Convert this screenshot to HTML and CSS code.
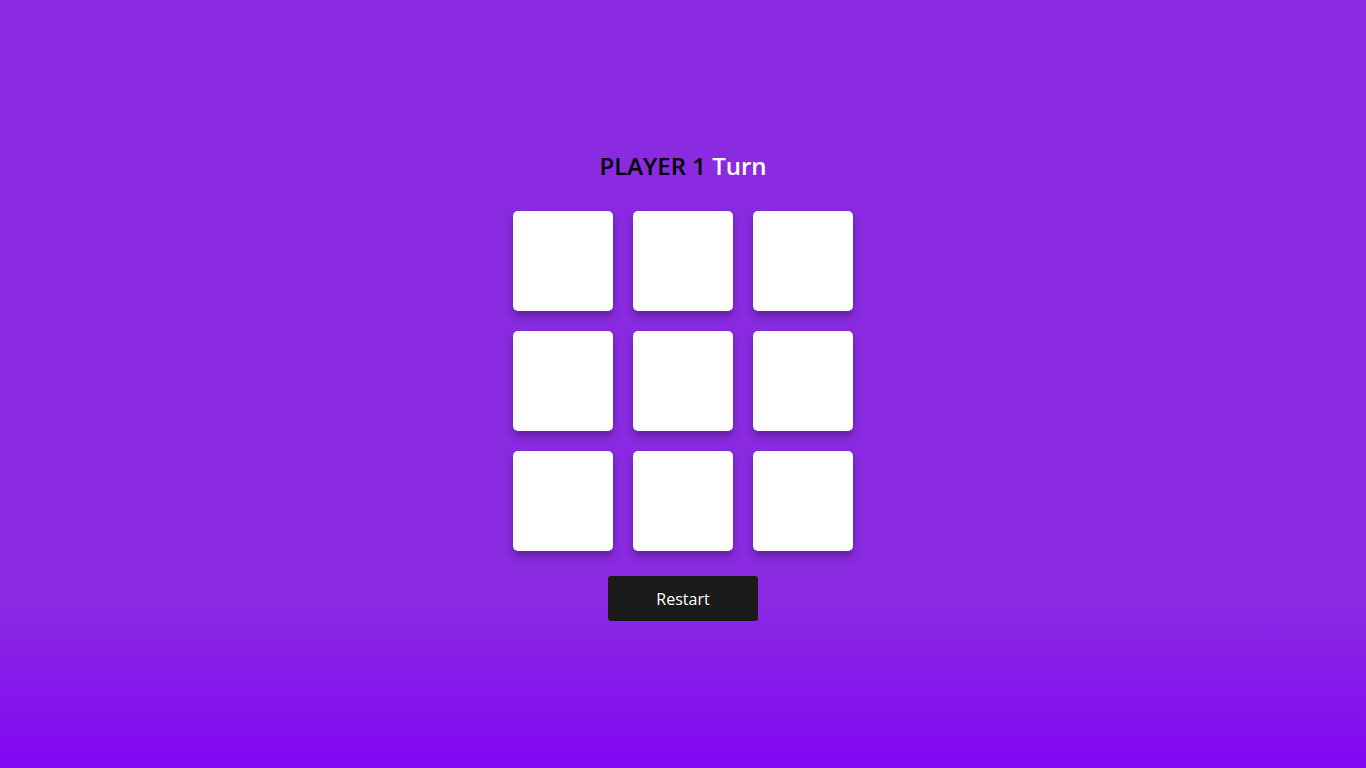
FILE: index.html
```html
<!DOCTYPE html>
<html lang="en">
<head>
<meta charset="UTF-8">
<title>Tic Tac Toe</title>
<link rel="stylesheet" href="styles.css">
</head>
<body>
<main class="game">
  <h1 class="turn"><span class="player">PLAYER 1</span> Turn</h1>
  <div class="board">
    <div class="cell"></div><div class="cell"></div><div class="cell"></div>
    <div class="cell"></div><div class="cell"></div><div class="cell"></div>
    <div class="cell"></div><div class="cell"></div><div class="cell"></div>
  </div>
  <button class="restart">Restart</button>
</main>
</body>
</html>
```
FILE: styles.css
```css
* { box-sizing: border-box; }
html, body { margin: 0; padding: 0; height: 100%; }
body {
  font-family: "Open Sans", "Liberation Sans", sans-serif;
  background: linear-gradient(180deg, #8a2be2 0%, #8a2be2 78%, #8206f4 100%);
  min-height: 768px;
}
.game {
  display: flex;
  flex-direction: column;
  align-items: center;
  padding-top: 149px;
}
.turn {
  margin: 0;
  font-size: 24px;
  font-weight: 600;
  line-height: 34px;
  color: #fff;
}
.player { color: #000; }
.board {
  margin-top: 28px;
  display: grid;
  grid-template-columns: repeat(3, 100px);
  grid-auto-rows: 100px;
  gap: 20px;
}
.cell {
  background: #fff;
  border-radius: 5px;
  box-shadow: 0 5px 10px rgba(0, 0, 0, 0.3);
}
.restart {
  margin-top: 25px;
  width: 150px;
  height: 45px;
  border: none;
  border-radius: 3px;
  background: #1b1b1b;
  color: #fff;
  font-family: inherit;
  font-size: 16px;
  cursor: pointer;
}
```
